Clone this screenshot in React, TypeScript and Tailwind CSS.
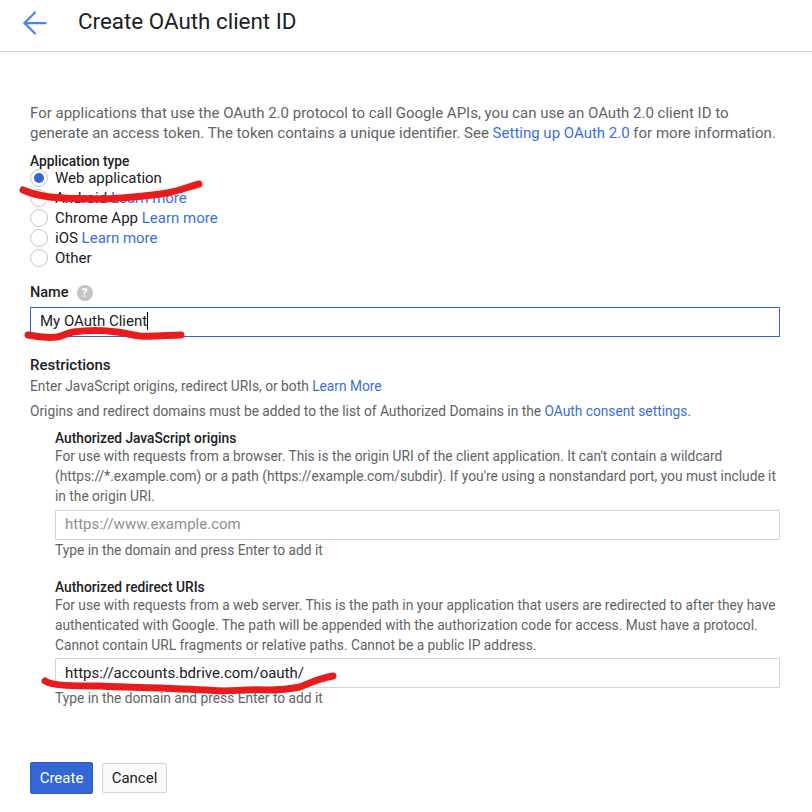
import { ArrowLeft } from "lucide-react";

const Learn = ({ children }: { children: React.ReactNode }) => (
  <a className="text-[#3b6fd8]">{children}</a>
);

const Radio = ({ label, link, checked }: { label: string; link?: boolean; checked?: boolean }) => (
  <div className="flex items-center h-5 text-[15px] text-[#202124]">
    <span className="w-[18px] h-[18px] rounded-full border border-[#c8c8c8] mr-[7px] flex items-center justify-center shrink-0 bg-white">
      {checked && <span className="w-2.5 h-2.5 rounded-full bg-[#3367d6]" />}
    </span>
    <span>
      {label}
      {link && <> <Learn>Learn more</Learn></>}
    </span>
  </div>
);

const App = () => {
  return (
    <div className="relative w-[812px] h-[812px] overflow-hidden bg-white font-['Roboto',sans-serif] text-[13.75px] leading-5 text-[#5f6368]">
      <div className="flex items-center h-[52px] border-b border-[#d8d8d8] pb-2 pl-[17px]">
        <ArrowLeft className="w-9 h-9 mt-[3px] text-[#4a86e8]" strokeWidth={1.5} />
        <h1 className="ml-[25px] -mt-[2px] text-[22.4px] text-[#202124]">Create OAuth client ID</h1>
      </div>

      <div className="pl-[30px] pr-8 pt-[51px]">
        <p className="text-[15px]">
          For applications that use the OAuth 2.0 protocol to call Google APIs, you can use an OAuth 2.0 client ID to
          <br />
          generate an access token. The token contains a unique identifier. See <Learn>Setting up OAuth 2.0</Learn> for more information.
        </p>

        <div className="mt-[8px] font-medium text-[#202124] leading-5">Application type</div>
        <div className="-mt-[3px]">
          <Radio label="Web application" checked />
          <Radio label="Android" link />
          <Radio label="Chrome App" link />
          <Radio label="iOS" link />
          <Radio label="Other" />
        </div>

        <div className="mt-[15px] flex items-center font-medium text-[14.5px] text-[#202124]">
          Name
          <span className="ml-[8px] w-4 h-4 rounded-full bg-[#c4c4c4] text-white text-[12px] font-bold flex items-center justify-center">?</span>
        </div>
        <div className="mt-1 h-[30px] w-[750px] border border-[#3367d6] pl-[9px] pb-[2px] flex items-center text-[15px] text-[#202124]">
          My OAuth Client<span className="w-px h-[18px] bg-black" />
        </div>

        <div className="mt-[18px] font-medium text-[15px] text-[#202124]">Restrictions</div>
        <p className="mt-[1px]">
          Enter JavaScript origins, redirect URIs, or both <Learn>Learn More</Learn>
        </p>
        <p className="mt-[5px]">
          Origins and redirect domains must be added to the list of Authorized Domains in the <Learn>OAuth consent settings</Learn>.
        </p>

        <div className="pl-[25px] mt-[7px]">
          <div className="font-medium text-[#202124] -mb-[2px]">Authorized JavaScript origins</div>
          <p>
            For use with requests from a browser. This is the origin URI of the client application. It can't contain a wildcard
            (https://*.example.com) or a path (https://example.com/subdir). If you're using a nonstandard port, you must include it
            in the origin URI.
          </p>
          <div className="mt-1 h-[30px] w-[725px] border border-[#d4d4d4] rounded-[1px] pl-[9px] pb-[2px] flex items-center text-[15px] text-[#8f8f8f]">
            https://www.example.com
          </div>
          <p>Type in the domain and press Enter to add it</p>

          <div className="mt-[17px] font-medium text-[#202124] -mb-[2px]">Authorized redirect URIs</div>
          <p>
            For use with requests from a web server. This is the path in your application that users are redirected to after they have
            authenticated with Google. The path will be appended with the authorization code for access. Must have a protocol.
            Cannot contain URL fragments or relative paths. Cannot be a public IP address.
          </p>
          <div className="mt-[3px] h-[30px] w-[725px] border border-[#d4d4d4] rounded-[1px] pl-[9px] flex items-center text-[15px] text-[#202124]">
            https://accounts.bdrive.com/oauth/
          </div>
          <p>Type in the domain and press Enter to add it</p>
        </div>

        <div className="mt-[54px] flex items-center gap-[9px] text-[15px]">
          <button className="w-[63px] h-8 rounded-[2px] bg-[#3367d6] border border-[#2a5bc4] text-white">Create</button>
          <button className="w-[65px] h-[30px] rounded-[2px] bg-[#fafafa] border border-[#d4d4d4] text-[#202124]">Cancel</button>
        </div>
      </div>

      {/* red pen marks */}
      <svg className="absolute inset-0 pointer-events-none" width="812" height="812" fill="none" stroke="#e81c1c" strokeWidth="7" strokeLinecap="round" strokeLinejoin="round">
        <path d="M23 190 C32 194 42 196 50 197 C68 199 85 199 100 199 C112 199 122 198 133 197 C145 196 156 195 167 193 C178 191 188 187 199 184" />
        <path d="M28 335 C38 337 48 338 57 337 C63 336 67 333 73 332 C88 330 103 330 117 332 C125 333 132 335 140 336 C155 337 168 335 181 335" />
        <path d="M45 681 C52 686 75 686 100 686 C140 688 180 688 220 691 C235 691 250 689 267 690 C280 690 290 689 300 687 C312 682 320 678 333 676" />
      </svg>
    </div>
  );
};

export default App;
